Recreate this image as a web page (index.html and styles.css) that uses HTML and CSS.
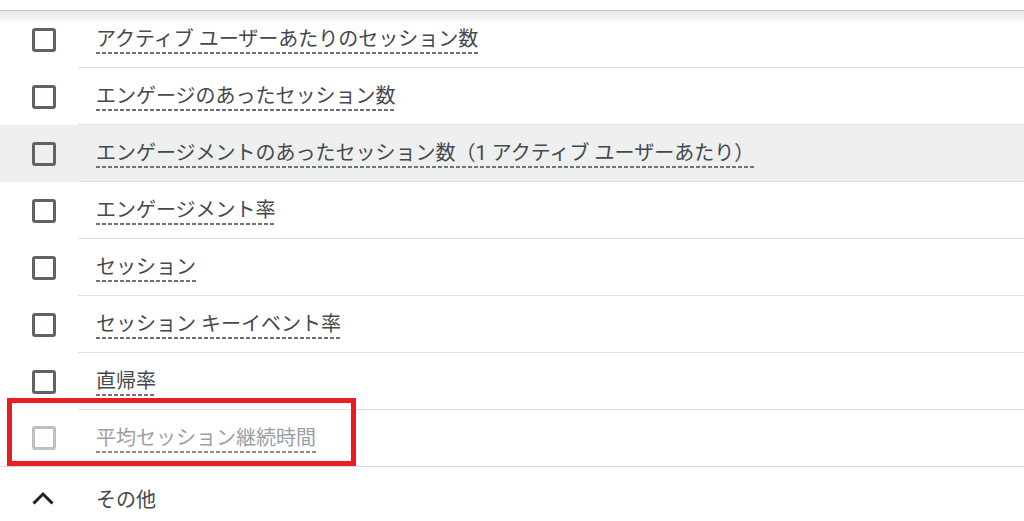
FILE: index.html
```html
<!DOCTYPE html>
<html lang="ja">
<head>
    <meta charset="UTF-8">
    <title>指標の選択</title>
    <link rel="stylesheet" href="styles.css">
</head>
<body>
    <div class="topbar"></div>

    <section class="metric-list">
        <div class="row">
            <div class="check-cell"><span class="checkbox"></span></div>
            <div class="label-cell"><span class="label">アクティブ ユーザーあたりのセッション数</span></div>
        </div>
        <div class="row">
            <div class="check-cell"><span class="checkbox"></span></div>
            <div class="label-cell"><span class="label">エンゲージのあったセッション数</span></div>
        </div>
        <div class="row hover">
            <div class="check-cell"><span class="checkbox"></span></div>
            <div class="label-cell"><span class="label">エンゲージメントのあったセッション数（1 アクティブ ユーザーあたり）</span></div>
        </div>
        <div class="row">
            <div class="check-cell"><span class="checkbox"></span></div>
            <div class="label-cell"><span class="label">エンゲージメント率</span></div>
        </div>
        <div class="row">
            <div class="check-cell"><span class="checkbox"></span></div>
            <div class="label-cell"><span class="label">セッション</span></div>
        </div>
        <div class="row">
            <div class="check-cell"><span class="checkbox"></span></div>
            <div class="label-cell"><span class="label">セッション キーイベント率</span></div>
        </div>
        <div class="row">
            <div class="check-cell"><span class="checkbox"></span></div>
            <div class="label-cell"><span class="label">直帰率</span></div>
        </div>
        <div class="row last disabled">
            <div class="check-cell"><span class="checkbox"></span></div>
            <div class="label-cell"><span class="label">平均セッション継続時間</span></div>
            <div class="highlight-box"></div>
        </div>
    </section>

    <div class="group-row">
        <div class="check-cell">
            <svg class="chevron" width="24" height="24" viewBox="0 0 24 24">
                <polyline points="2.5,17.5 12,8 21.5,17.5" fill="none" stroke="#202124" stroke-width="3"/>
            </svg>
        </div>
        <div class="group-label">その他</div>
    </div>
</body>
</html>
```

FILE: styles.css
```css
body{
    margin:0;
    background:#fff;
    font-family:Roboto, "Noto Sans CJK JP", sans-serif;
    color:#45484c;
}

.topbar{
    height:10px;
    border-bottom:1px solid #c8c8c8;
    position:relative;
    z-index:1;
}
.topbar::after{
    content:"";
    position:absolute;
    left:0;
    right:0;
    top:11px;
    height:14px;
    background:linear-gradient(to bottom, rgba(0,0,0,0.09), rgba(0,0,0,0));
}

.metric-list{
    border-bottom:1px solid #dadce0;
}

.row{
    display:flex;
    height:57px;
    position:relative;
}
.row.last{
    height:56px;
}
.row.hover{
    background:#eeefef;
}

.check-cell{
    width:78px;
    flex-shrink:0;
    display:flex;
    align-items:center;
    padding-left:32px;
    box-sizing:border-box;
}

.checkbox{
    width:24px;
    height:24px;
    border:3px solid #5f6368;
    border-radius:3px;
    box-sizing:border-box;
}

.label-cell{
    flex:1;
    display:flex;
    align-items:center;
    border-bottom:1px solid #e0e0e0;
    padding-top:2px;
    padding-left:18px;
}
.row.last .label-cell{
    border-bottom:none;
}

.label{
    font-size:20px;
    line-height:24px;
    padding-bottom:3px;
    background-image:linear-gradient(to right, #6f7378 4px, transparent 4px);
    background-size:6px 1.5px;
    background-repeat:repeat-x;
    background-position:left bottom;
}

.disabled .checkbox{
    border-color:#bdc1c6;
}
.disabled .label{
    color:#9aa0a6;
    background-image:linear-gradient(to right, #8a8f95 4px, transparent 4px);
}

.highlight-box{
    position:absolute;
    left:7px;
    top:-12px;
    width:349px;
    height:68px;
    border:5px solid #ec1c24;
    box-sizing:border-box;
}

.group-row{
    display:flex;
    height:57px;
}
.group-row .check-cell{
    padding-left:31px;
    padding-top:4px;
}
.group-label{
    display:flex;
    align-items:center;
    padding-top:6px;
    padding-left:18px;
    font-size:20px;
}
```
